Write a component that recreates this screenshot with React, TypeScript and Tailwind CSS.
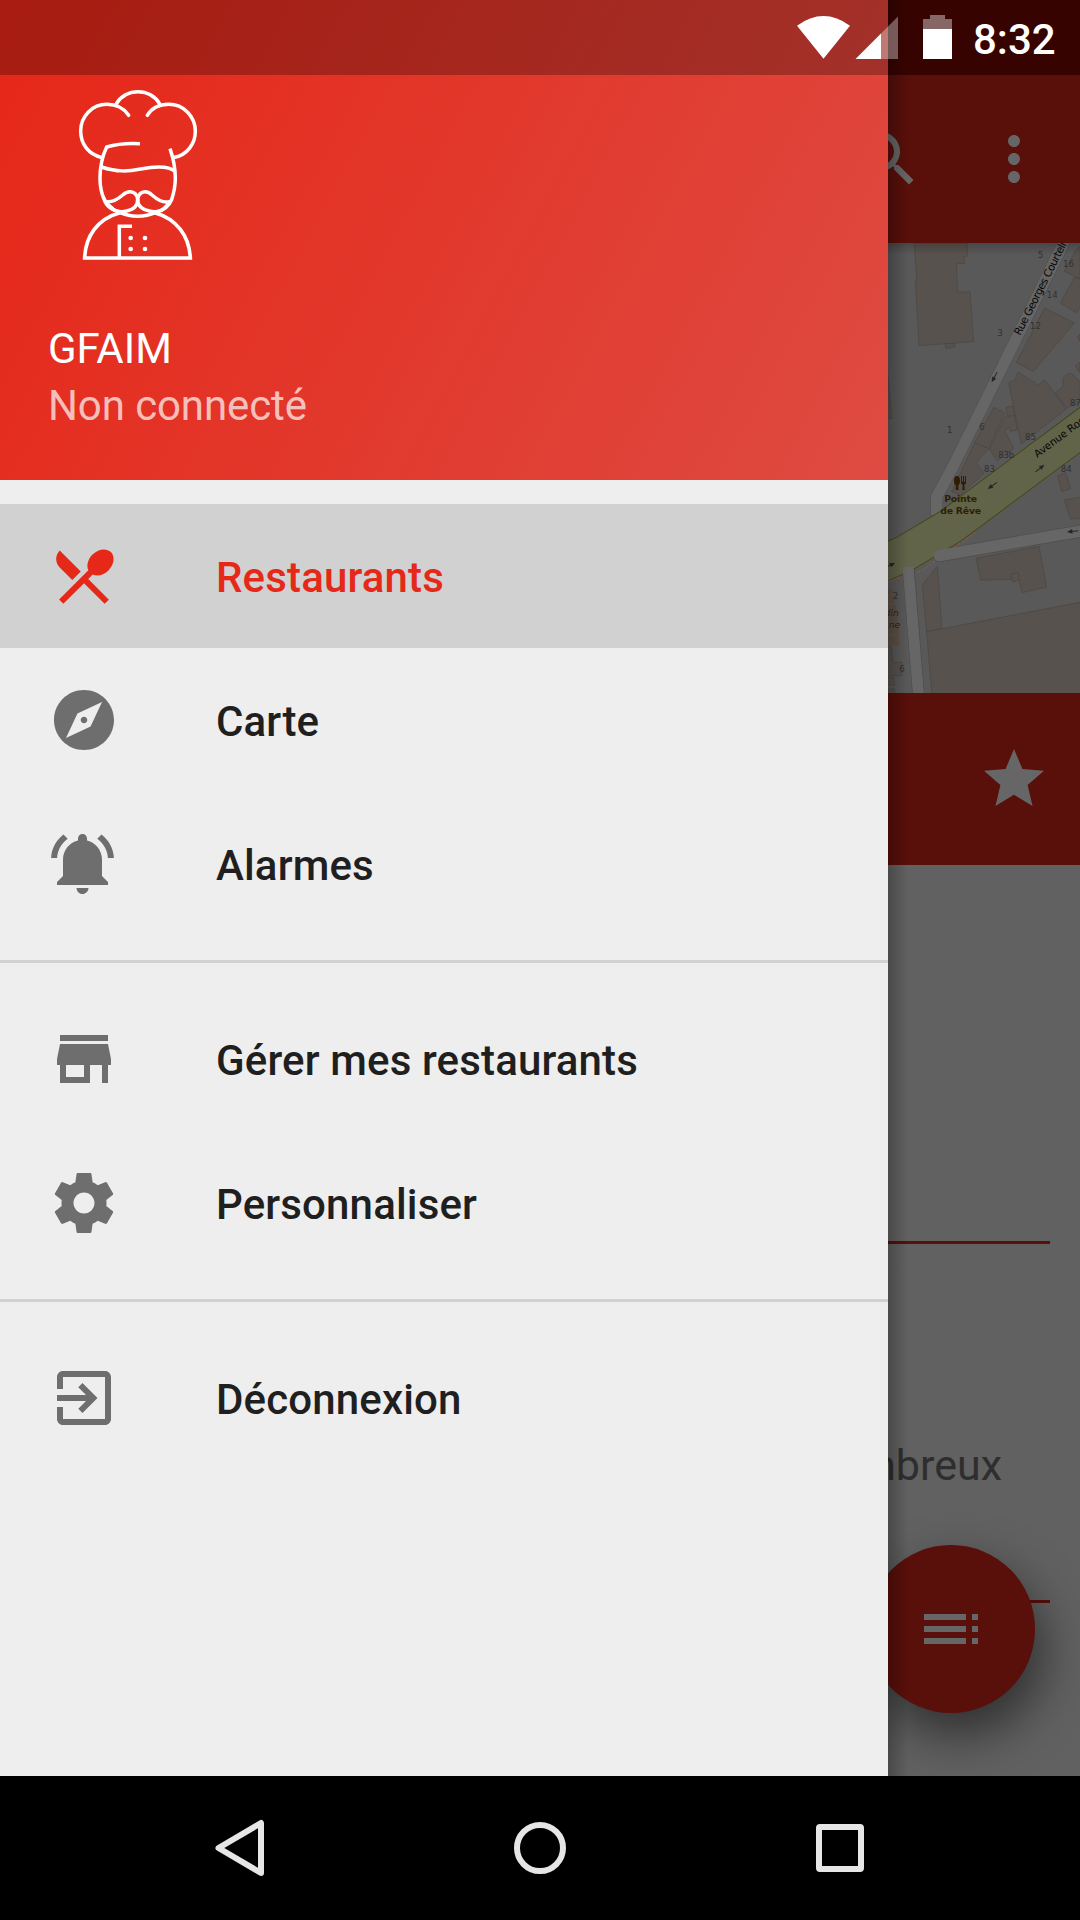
import React from "react";

const icons = {
  restaurant:
    "M8.1 13.34l2.83-2.83L3.91 3.5c-1.56 1.56-1.56 4.09 0 5.66l4.19 4.18zm6.78-1.81c1.53.71 3.68.21 5.27-1.38 1.91-1.91 2.28-4.65.81-6.12-1.46-1.46-4.2-1.1-6.12.81-1.59 1.59-2.09 3.74-1.38 5.27L3.7 19.87l1.41 1.41L12 14.41l6.88 6.88 1.41-1.41L13.41 13l1.47-1.47z",
  explore:
    "M12 10.9c-.61 0-1.1.49-1.1 1.1s.49 1.1 1.1 1.1c.61 0 1.1-.49 1.1-1.1s-.49-1.1-1.1-1.1zM12 2C6.48 2 2 6.48 2 12s4.48 10 10 10 10-4.48 10-10S17.52 2 12 2zm2.19 12.19L6 18l3.81-8.19L18 6l-3.81 8.19z",
  bell: "M6.58 3.58L5.15 2.15C2.76 3.97 1.18 6.8 1.03 10h2c.15-2.65 1.51-4.97 3.55-6.42zM19.97 10h2c-.15-3.2-1.73-6.03-4.13-7.85l-1.43 1.43c2.03 1.45 3.41 3.77 3.56 6.42zm-1.97.5c0-3.07-2.13-5.64-5-6.32V3.5c0-.83-.67-1.5-1.5-1.5S10 2.67 10 3.5v.68c-2.87.68-5 3.25-5 6.32V16l-2 2v1h17v-1l-2-2v-5.5zM11.5 22c.14 0 .27-.01.4-.04.65-.13 1.19-.58 1.44-1.18.1-.24.16-.5.16-.78h-4c0 1.1.9 2 2 2z",
  store: "M20 4H4v2h16V4zm1 10v-2l-1-5H4l-1 5v2h1v6h10v-6h4v6h2v-6h1zm-9 4H6v-4h6v4z",
  settings:
    "M19.43 12.98c.04-.32.07-.64.07-.98s-.03-.66-.07-.98l2.11-1.65c.19-.15.24-.42.12-.64l-2-3.46c-.12-.22-.39-.3-.61-.22l-2.49 1c-.52-.4-1.08-.73-1.69-.98l-.38-2.65C14.46 2.18 14.25 2 14 2h-4c-.25 0-.46.18-.49.42l-.38 2.65c-.61.25-1.17.59-1.69.98l-2.49-1c-.23-.09-.49 0-.61.22l-2 3.46c-.13.22-.07.49.12.64l2.11 1.65c-.04.32-.07.65-.07.98s.03.66.07.98l-2.11 1.65c-.19.15-.24.42-.12.64l2 3.46c.12.22.39.3.61.22l2.49-1c.52.4 1.08.73 1.69.98l.38 2.65c.03.24.24.42.49.42h4c.25 0 .46-.18.49-.42l.38-2.65c.61-.25 1.17-.59 1.69-.98l2.49 1c.23.09.49 0 .61-.22l2-3.46c.12-.22.07-.49-.12-.64l-2.11-1.65zM12 15.5c-1.93 0-3.5-1.57-3.5-3.5s1.57-3.5 3.5-3.5 3.5 1.57 3.5 3.5-1.57 3.5-3.5 3.5z",
  exit: "M10.09 15.59L11.5 17l5-5-5-5-1.41 1.41L12.67 11H3v2h9.67l-2.58 2.59zM19 3H5c-1.11 0-2 .9-2 2v4h2V5h14v14H5v-4H3v4c0 1.1.89 2 2 2h14c1.1 0 2-.9 2-2V5c0-1.1-.9-2-2-2z",
  search:
    "M15.5 14h-.79l-.28-.27C15.41 12.59 16 11.11 16 9.5 16 5.91 13.09 3 9.5 3S3 5.91 3 9.5 5.91 16 9.5 16c1.61 0 3.09-.59 4.23-1.57l.27.28v.79l5 4.99L20.49 19l-4.99-5zm-6 0C7.01 14 5 11.99 5 9.5S7.01 5 9.5 5 14 7.01 14 9.5 11.99 14 9.5 14z",
  more: "M12 8c1.1 0 2-.9 2-2s-.9-2-2-2-2 .9-2 2 .9 2 2 2zm0 2c-1.1 0-2 .9-2 2s.9 2 2 2 2-.9 2-2-.9-2-2-2zm0 6c-1.1 0-2 .9-2 2s.9 2 2 2 2-.9 2-2-.9-2-2-2z",
  star: "M12 17.27L18.18 21l-1.64-7.03L22 9.24l-7.19-.61L12 2 9.19 8.63 2 9.24l5.46 4.73L5.82 21z",
  toc: "M3 9h14V7H3v2zm0 4h14v-2H3v2zm0 4h14v-2H3v2zm16 0h2v-2h-2v2zm0-10v2h2V7h-2zm0 6h2v-2h-2v2z",
};

function Icon({ name, className = "" }: { name: keyof typeof icons; className?: string }) {
  return (
    <svg viewBox="0 0 24 24" fill="currentColor" className={"size-[72px] shrink-0 " + className}>
      <path d={icons[name]} />
    </svg>
  );
}

function MenuItem({ icon, label, active = false }: { icon: keyof typeof icons; label: string; active?: boolean }) {
  return (
    <li
      className={
        "flex h-36 items-center gap-24 px-12 " +
        (active ? "bg-[#d1d1d1] text-[#e62819]" : "text-[#1f1f1f]")
      }
    >
      <Icon name={icon} className={active ? "" : "text-[#6e6e6e]"} />
      <span className="pt-1 text-[42px] leading-[50px] font-medium tracking-[0.15px] whitespace-nowrap">{label}</span>
    </li>
  );
}

function ChefLogo() {
  return (
    <svg viewBox="0 0 480 630" className="h-[210px] w-[160px]" fill="none" stroke="#fff" strokeWidth="10.5">
      <path d="M168 103C182 78 208 65 234 65s52 13 66 38" />
      <path d="M206 136C190 112 166 103 141 103C96 103 62 139 62 183c0 40 25 70 62 79" strokeLinecap="round" />
      <path d="M262 136C277 112 302 103 326 103c45 0 80 36 80 81 0 38-25 70-62 78" strokeLinecap="round" />
      <path d="M240 221C205 219 170 222 140 231C128 256 120 290 120 325c0 28 5 46 12 62 6 20 24 34 52 40" />
      <path d="M330 236C341 268 346 300 346 325c0 30-6 48-11 64-8 20-26 34-50 39" />
      <path d="M124 291c48 16 82 13 118 6s82-12 103 7" />
      <path d="M233 386C228 362 205 360 188 375c-18 16-34 22-50 20c12 26 38 34 62 28c24-5 34-18 33-37z" />
      <path d="M233 386C238 362 261 360 276 375c18 16 36 24 52 20c-12 26-36 34-60 28c-24-5-36-18-35-37z" />
      <path d="M132 378l10 18 24 22-8 2q-22-10-26-42zM337 378l-10 18-24 22 8 2q22-10 26-42z" fill="#fff" strokeWidth="3" />
      <path d="M180 428C112 446 76 500 74 564H391C388 498 350 446 284 428" strokeWidth="11" />
      <path d="M180 428c32 14 75 14 106 0" />
      <path d="M216 469H178V564" />
      <g fill="#fff" stroke="none">
        <circle cx="212" cy="504" r="7" />
        <circle cx="255" cy="504" r="7" />
        <circle cx="212" cy="537" r="7" />
        <circle cx="255" cy="537" r="7" />
      </g>
    </svg>
  );
}

function Arrow({ x, y, angle }: { x: number; y: number; angle: number }) {
  return (
    <g transform={`translate(${x} ${y}) rotate(${angle})`}>
      <path d="M-17 0H6" stroke="#262626" strokeWidth="3" />
      <path d="M17 0L1 -7V7z" fill="#262626" />
    </g>
  );
}

function StreetMap() {
  return (
    <svg viewBox="24 39 576 1350" className="block h-[450px] w-48" fontFamily="DejaVu Sans, sans-serif">
      <rect x="24" y="39" width="576" height="1350" fill="#595959" />
      <g fill="#58524e" stroke="#4b4541" strokeWidth="2">
        <path d="M103 39L110 152H106L117 347L281 335L270 185L233 187L229 100H253V79H263L261 39z" />
        <path d="M196 342L224 340V352L197 355z" />
        <path d="M20 400L35 565H20z" />
        <path d="M600 50L588 60L553 124L600 146zM583 142L541 220L590 248L610 215V150z" />
        <path d="M494 234L583 279L460 424L409 398z" />
        <path d="M600 312L592 322L600 334zM600 396L586 408L600 428z" />
        <path d="M414 426L474 465L494 450L560 536L424 642L386 458L405 450z" />
        <path d="M526 488L550 468C545 440 556 432 575 430L600 456V515L559 535z" />
        <path d="M378 532L398 528L404 556L382 558z" />
        <path d="M341 532L374 548L326 656L284 638z" />
        <path d="M374 562L404 556L412 600L392 604L386 592L374 602L402 656L352 692L328 658z" />
        <path d="M284 638L326 656L288 698L312 730L240 795L215 785z" />
        <path d="M532 738L557 728L572 776L546 785zM553 810L610 800V864L571 867z" />
        <path d="M288 985L477 949L500 1071L426 1088L416 1048L302 1050z" />
        <path d="M393 1033L414 1027L418 1050L398 1056z" />
        <path d="M172 1009L127 1064L140 1205L186 1195z" />
        <path d="M140 1205L610 1115V1395H156z" />
        <path d="M20 1250L34 1248L38 1297L66 1296V1337H20zM20 1343L42 1342L44 1365H20zM20 1378L42 1376L44 1395H20z" />
      </g>
      <path d="M20 1078H36L40 1100L50 1135L56 1190L58 1247H20z" fill="#5d5044" />
      <path d="M24 1093H40M24 1122H46M24 1150H52M24 1184H56M24 1215H58" stroke="#665e55" strokeWidth="2" />
      <g fill="none" strokeLinejoin="round">
        <path d="M560 20L218 712L170 800V850" stroke="#4d4d4d" strokeWidth="37" strokeLinecap="round" />
        <path d="M560 20L218 712L170 800V850" stroke="#666666" strokeWidth="34" strokeLinecap="round" />
        <path d="M178 977L610 902" stroke="#4d4d4d" strokeWidth="38" strokeLinecap="round" />
        <path d="M84 1000L116 1400" stroke="#4d4d4d" strokeWidth="37" />
        <path d="M-40 1022L75 970L210 890L640 570" stroke="#404710" strokeWidth="111" />
        <path d="M-40 1022L75 970L210 890L640 570" stroke="#626449" strokeWidth="106" />
        <path d="M178 977L610 902" stroke="#666666" strokeWidth="34" strokeLinecap="round" />
        <path d="M84 1010L116 1400" stroke="#666666" strokeWidth="33" />
        <path d="M24 1055L64 1042M112 1028Q145 1014 172 985M222 952L285 908" stroke="#a4524e" strokeWidth="3" strokeDasharray="8 6" />
      </g>
      <Arrow x={343} y={442} angle={118} />
      <Arrow x={480} y={715} angle={-38} />
      <Arrow x={337} y={767} angle={144} />
      <Arrow x={30} y={1006} angle={-25} />
      <Arrow x={578} y={904} angle={173} />
      <g fill="#303030" fontSize="26">
        <text x="473" y="83">5</text>
        <text x="549" y="111">16</text>
        <text x="500" y="204">14</text>
        <text x="450" y="296">12</text>
        <text x="352" y="317">3</text>
        <text x="201" y="608">1</text>
        <text x="298" y="600">6</text>
        <text x="570" y="528">87</text>
        <text x="435" y="629">85</text>
        <text x="355" y="685" textLength="48">83b</text>
        <text x="312" y="725">83</text>
        <text x="542" y="727">84</text>
        <text x="38" y="1106">2</text>
        <text x="58" y="1325">6</text>
      </g>
      <g fill="#060606">
        <text transform="translate(421 318) rotate(-63.200)" fontSize="32" textLength="308" stroke="#686868" strokeWidth="2" paintOrder="stroke">
          Rue Georges Courteli
        </text>
        <text transform="translate(472 684) rotate(-37)" fontSize="31">
          Avenue Roc
        </text>
      </g>
      <g fill="#2e1e04" fontSize="28" fontWeight="700" textAnchor="middle">
        <text x="242" y="816" textLength="99">Pointe</text>
        <text x="242" y="852" textLength="123">de Rêve</text>
      </g>
      <g fill="#2e1e04">
        <ellipse cx="231" cy="752" rx="9" ry="14" />
        <path d="M228 760h6l2 20h-9zM243 738h3v17h3v-17h3v17h3v-17h3v20q0 5-5 6l1 16h-7l1-16q-5-1-5-6z" />
      </g>
      <g fill="#292420" fontSize="28" fontStyle="italic" textAnchor="end">
        <text x="57" y="1158">Jardin</text>
        <text x="61" y="1194">ne</text>
      </g>
    </svg>
  );
}

function StatusBar() {
  return (
    <div className="absolute inset-x-0 top-0 z-30 h-[75px]">
      <svg viewBox="0 0 180 75" className="absolute top-0 left-[780px] h-[75px] w-[180px]" fill="#fff">
        <path d="M17 25.7Q43.5 6.500 70 25.700L43.500 58.700z" />
        <path d="M101 33.500V59H75.500z" />
        <path d="M101 33.500L118 16.500V59H101z" fillOpacity=".35" />
        <path d="M143 29h29v30h-29z" />
        <path d="M143 29V19h7v-4h15v4h7v10z" fillOpacity=".4" />
      </svg>
      <span className="absolute top-[15px] left-[973px] text-[42px] leading-[50px] font-medium text-white">8:32</span>
    </div>
  );
}

function Content() {
  return (
    <main className="flex h-[1776px] flex-col bg-[#616161] text-[#666]">
      <div className="h-[75px] bg-[#370300]" />
      <header className="flex h-[168px] items-center justify-end gap-[54px] bg-[#590f0a] pr-[30px]">
        <Icon name="search" />
        <Icon name="more" />
      </header>
      <section className="relative flex h-[450px] justify-end bg-[#595959]">
        <StreetMap />
        <div className="absolute inset-x-0 top-0 h-3 bg-gradient-to-b from-black/20 to-transparent" />
      </section>
      <section className="flex h-[172px] items-center justify-end bg-[#590f0a] pr-[30px]">
        <Icon name="star" />
      </section>
      <section className="flex grow flex-col pr-[30px]">
        <div className="h-[376px]" />
        <hr className="h-[3px] border-0 bg-[#590f0a]" />
        <p className="mt-[195px] mr-[48px] text-right text-[43px] leading-[52px] text-[#2e2e2e]">nombreux</p>
        <div className="h-[109px]" />
        <hr className="h-[3px] border-0 bg-[#590f0a]" />
      </section>
      <button className="absolute top-[1545px] left-[867px] flex size-[168px] items-center justify-center rounded-full bg-[#590f0a] text-[#666] shadow-[8px_22px_48px_rgba(0,0,0,0.5)]">
        <Icon name="toc" />
      </button>
    </main>
  );
}

function Drawer() {
  return (
    <aside className="absolute top-0 left-0 z-20 h-[1776px] w-[888px] bg-[#eee]">
      <div className="absolute top-0 left-full h-full w-5 bg-gradient-to-r from-black/25 to-transparent" />
      <header className="flex h-[480px] flex-col bg-[linear-gradient(118deg,#e62617_0%,#de4b42_100%)]">
        <div className="h-[75px] shrink-0 bg-black/27" />
        <div className="-mt-[5px] ml-[60px] h-[210px]">
          <ChefLogo />
        </div>
        <div className="mt-[40px] ml-12 text-[42px] leading-[57px]">
          <p className="text-white">GFAIM</p>
          <p className="tracking-[-0.1px] text-white/70">Non connecté</p>
        </div>
      </header>
      <nav className="pt-6">
        <ul>
          <MenuItem icon="restaurant" label="Restaurants" active />
          <MenuItem icon="explore" label="Carte" />
          <MenuItem icon="bell" label="Alarmes" />
        </ul>
        <hr className="my-6 h-[3px] border-0 bg-[#d1d1d1]" />
        <ul>
          <MenuItem icon="store" label="Gérer mes restaurants" />
          <MenuItem icon="settings" label="Personnaliser" />
        </ul>
        <hr className="my-6 h-[3px] border-0 bg-[#d1d1d1]" />
        <ul>
          <MenuItem icon="exit" label="Déconnexion" />
        </ul>
      </nav>
    </aside>
  );
}

function NavigationBar() {
  return (
    <footer className="relative z-30 flex h-36 items-center justify-center gap-[228px] bg-black">
      <svg viewBox="0 0 72 72" className="size-[72px]" fill="none" stroke="#e6e6e6" strokeWidth="6" strokeLinejoin="round">
        <path d="M57 11V61L14.500 36z" />
      </svg>
      <svg viewBox="0 0 72 72" className="size-[72px]" fill="none" stroke="#e6e6e6" strokeWidth="6">
        <circle cx="36" cy="36" r="23" />
      </svg>
      <svg viewBox="0 0 72 72" className="size-[72px]" fill="none" stroke="#e6e6e6" strokeWidth="6" strokeLinejoin="round">
        <rect x="15" y="15" width="42" height="42" rx="1" />
      </svg>
    </footer>
  );
}

export default function App() {
  return (
    <div className="relative h-[1920px] w-[1080px] overflow-hidden bg-black font-[Roboto,sans-serif]">
      <Content />
      <Drawer />
      <StatusBar />
      <NavigationBar />
    </div>
  );
}
